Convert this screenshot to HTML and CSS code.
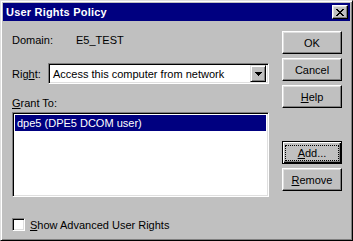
FILE: index.html
```html
<!DOCTYPE html>
<html lang="en">

<head>
    <meta charset="UTF-8" />
    <title>User Rights Policy</title>
    <link rel="stylesheet" href="styles.css">
</head>

<body>

    <div class="window">
        <div class="titlebar">
            <span class="title">User Rights Policy</span>
            <span class="close-btn">
                <svg width="8" height="7" viewBox="0 0 8 7">
                    <path d="M0 0h2v1h-2zM6 0h2v1h-2zM1 1h2v1h-2zM5 1h2v1h-2zM2 2h4v1h-4zM3 3h2v1h-2zM2 4h4v1h-4zM1 5h2v1h-2zM5 5h2v1h-2zM0 6h2v1h-2zM6 6h2v1h-2z" fill="#000" />
                </svg>
            </span>
        </div>

        <div class="content">
            <div class="left-col">
                <div class="domain-row">
                    <span class="domain-label">Domain:</span>
                    <span>E5_TEST</span>
                </div>

                <div class="right-row">
                    <span class="right-label">Rig<u>h</u>t:</span>
                    <div class="combo">
                        <span class="combo-text">Access this computer from network</span>
                        <span class="combo-btn">
                            <svg width="7" height="4" viewBox="0 0 7 4">
                                <path d="M0 0h7v1h-1v1h-1v1h-1v1h-1v-1h-1v-1h-1v-1h-1z" fill="#000" />
                            </svg>
                        </span>
                    </div>
                </div>

                <div class="grant-label"><u>G</u>rant To:</div>
                <div class="listbox">
                    <div class="list-item selected">dpe5 (DPE5 DCOM user)</div>
                </div>

                <div class="check-row">
                    <span class="checkbox"></span>
                    <span><u>S</u>how Advanced User Rights</span>
                </div>
            </div>

            <div class="right-col">
                <div class="btn">OK</div>
                <div class="btn">Cancel</div>
                <div class="btn"><u>H</u>elp</div>
                <div class="btn default"><span class="focus"><u>A</u>dd...</span></div>
                <div class="btn"><u>R</u>emove</div>
            </div>
        </div>
    </div>

</body>

</html>
```

FILE: styles.css
```css
body {
    margin: 0;
    font-family: 'Liberation Sans', Arial, sans-serif;
    font-size: 11px;
    color: #000;
}

.window {
    width: 353px;
    height: 241px;
    box-sizing: border-box;
    background: #c0c0c0;
    border: 1px solid;
    border-color: #dfdfdf #000 #000 #dfdfdf;
    box-shadow: inset 1px 1px #fff, inset -1px -1px #808080;
    padding: 2px;
}

.titlebar {
    height: 18px;
    background: #000080;
    color: #fff;
    display: flex;
    align-items: center;
    justify-content: space-between;
    padding: 0 2px 0 3px;
}

.title {
    font-weight: bold;
    font-size: 11px;
    letter-spacing: 0.2px;
}

.close-btn {
    width: 16px;
    height: 14px;
    box-sizing: border-box;
    background: #c0c0c0;
    border: 1px solid;
    border-color: #fff #000 #000 #fff;
    box-shadow: inset -1px -1px #808080, inset 1px 1px #dfdfdf;
    display: flex;
    align-items: center;
    justify-content: center;
}

.content {
    display: flex;
    padding: 0 8px 0 9px;
}

.left-col {
    width: 257px;
}

.domain-row {
    display: flex;
    margin-top: 13px;
    line-height: 13px;
}

.domain-label {
    width: 64px;
}

.right-row {
    display: flex;
    align-items: center;
    margin-top: 16px;
}

.right-label {
    width: 36px;
}

.combo {
    width: 221px;
    height: 21px;
    box-sizing: border-box;
    background: #fff;
    border: 1px solid;
    border-color: #808080 #fff #fff #808080;
    box-shadow: inset 1px 1px #000, inset -1px -1px #dfdfdf;
    display: flex;
    align-items: center;
    justify-content: space-between;
    padding: 2px;
}

.combo-text {
    padding-left: 2px;
}

.combo-btn {
    width: 16px;
    height: 17px;
    box-sizing: border-box;
    background: #c0c0c0;
    border: 1px solid;
    border-color: #dfdfdf #000 #000 #dfdfdf;
    box-shadow: inset 1px 1px #fff, inset -1px -1px #808080;
    display: flex;
    align-items: center;
    justify-content: center;
}

.grant-label {
    margin-top: 13px;
    line-height: 13px;
}

.listbox {
    margin-top: 2px;
    height: 85px;
    box-sizing: border-box;
    background: #fff;
    border: 1px solid;
    border-color: #808080 #fff #fff #808080;
    box-shadow: inset 1px 1px #000, inset -1px -1px #dfdfdf;
    padding: 2px;
}

.list-item {
    height: 16px;
    line-height: 16px;
    padding-left: 2px;
}

.list-item.selected {
    background: #000080;
    color: #fff;
}

.check-row {
    display: flex;
    align-items: center;
    margin-top: 21px;
}

.checkbox {
    width: 13px;
    height: 13px;
    box-sizing: border-box;
    background: #fff;
    border: 1px solid;
    border-color: #808080 #fff #fff #808080;
    box-shadow: inset 1px 1px #000, inset -1px -1px #dfdfdf;
    margin-right: 5px;
}

.right-col {
    margin-left: auto;
    width: 60px;
    padding-top: 10px;
    display: flex;
    flex-direction: column;
    gap: 4px;
}

.btn {
    height: 23px;
    box-sizing: border-box;
    background: #c0c0c0;
    border: 1px solid;
    border-color: #fff #000 #000 #fff;
    box-shadow: inset -1px -1px #808080, inset 1px 1px #dfdfdf;
    display: flex;
    align-items: center;
    justify-content: center;
}

.btn.default {
    margin-top: 29px;
    border: 1px solid #000;
    box-shadow: inset 1px 1px #fff, inset -1px -1px #000, inset -2px -2px #808080;
}

.focus {
    outline: 1px dotted #000;
    outline-offset: 0;
    padding: 1px 4px 0;
    width: 44px;
    height: 13px;
    line-height: 13px;
    text-align: center;
}
```
